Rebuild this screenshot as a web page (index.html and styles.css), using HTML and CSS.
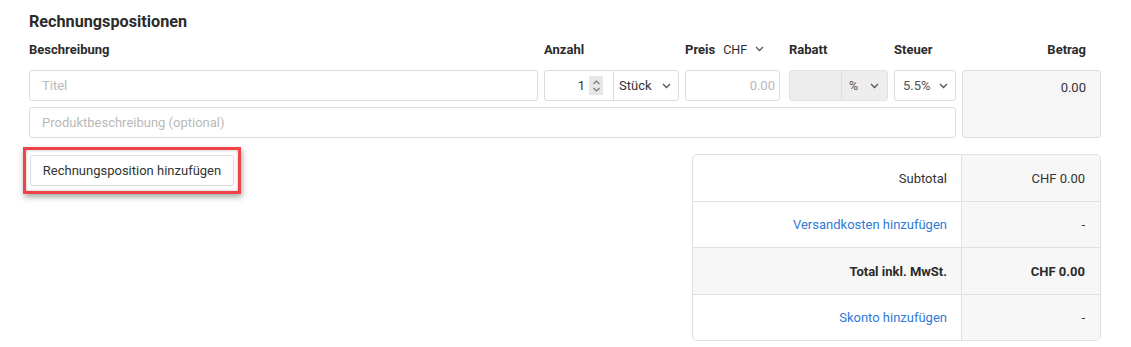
FILE: index.html
```html
<!DOCTYPE html>
<html lang="de">

<head>
    <meta charset="UTF-8">
    <meta name="viewport" content="width=device-width, initial-scale=1.0">
    <title>Rechnungspositionen</title>
    <link rel="stylesheet" href="styles.css">
</head>

<body>
    <section class="items">
        <h2 class="items-title">Rechnungspositionen</h2>

        <div class="item-grid">
            <div class="label">Beschreibung</div>
            <div class="label">Anzahl</div>
            <div class="label label-price">Preis
                <span class="currency">CHF
                    <svg class="chev" width="9" height="6" viewBox="0 0 9 6"><polyline points="1,1 4.5,4.5 8,1" /></svg>
                </span>
            </div>
            <div class="label label-discount">Rabatt</div>
            <div class="label">Steuer</div>
            <div class="label label-right">Betrag</div>

            <input class="field" type="text" placeholder="Titel">
            <div class="qty-group">
                <div class="qty-num">1
                    <span class="spinner">
                        <svg width="9" height="16" viewBox="0 0 9 16"><polyline points="1.5,6 4.5,3 7.5,6" /><polyline points="1.5,10 4.5,13 7.5,10" /></svg>
                    </span>
                </div>
                <div class="qty-unit">Stück
                    <svg class="chev" width="9" height="6" viewBox="0 0 9 6"><polyline points="1,1 4.5,4.5 8,1" /></svg>
                </div>
            </div>
            <input class="field field-num" type="text" placeholder="0.00">
            <div class="discount-group">
                <div class="discount-val"></div>
                <div class="discount-unit">%
                    <svg class="chev" width="9" height="6" viewBox="0 0 9 6"><polyline points="1,1 4.5,4.5 8,1" /></svg>
                </div>
            </div>
            <div class="select tax">5.5%
                <svg class="chev" width="9" height="6" viewBox="0 0 9 6"><polyline points="1,1 4.5,4.5 8,1" /></svg>
            </div>
            <div class="amount">0.00</div>

            <input class="field field-wide" type="text" placeholder="Produktbeschreibung (optional)">
        </div>

        <div class="below">
            <div class="highlight">
                <button class="btn-add" type="button">Rechnungsposition hinzufügen</button>
            </div>

            <div class="summary">
                <div class="sum-row">
                    <div class="sum-label">Subtotal</div>
                    <div class="sum-value">CHF 0.00</div>
                </div>
                <div class="sum-row short">
                    <div class="sum-label"><a href="#">Versandkosten hinzufügen</a></div>
                    <div class="sum-value">-</div>
                </div>
                <div class="sum-row total">
                    <div class="sum-label">Total inkl. MwSt.</div>
                    <div class="sum-value">CHF 0.00</div>
                </div>
                <div class="sum-row short">
                    <div class="sum-label"><a href="#">Skonto hinzufügen</a></div>
                    <div class="sum-value">-</div>
                </div>
            </div>
        </div>
    </section>
</body>

</html>
```

FILE: styles.css
```css
* {
    margin: 0;
    padding: 0;
    box-sizing: border-box;
}

body {
    font-family: Roboto, "Liberation Sans", sans-serif;
    font-size: 13px;
    color: #333;
    background-color: #fff;
}

.items {
    padding: 12px 30px 0 29px;
}

.items-title {
    font-size: 16.2px;
    font-weight: 700;
    line-height: 20px;
    color: #2b2b2b;
}

.item-grid {
    display: grid;
    grid-template-columns: 509px 135px 95px 102px 62px 139px;
    column-gap: 6px;
    row-gap: 6px;
    margin-top: 7px;
}

.label {
    display: flex;
    align-items: center;
    height: 20px;
    font-weight: 700;
    font-size: 13px;
    color: #2b2b2b;
    margin-bottom: 5px;
}

.label-discount {
    padding-left: 3px;
}

.label-right {
    justify-content: flex-end;
    padding-right: 15px;
}

.currency {
    display: inline-flex;
    align-items: center;
    gap: 8px;
    margin-left: 8px;
    font-weight: 400;
    font-size: 12.5px;
}

.chev {
    fill: none;
    stroke: #555;
    stroke-width: 1.3;
}

.field {
    height: 31px;
    border: 1px solid #dcdcdc;
    border-radius: 3px;
    padding: 0 12px;
    font-family: inherit;
    font-size: 13px;
    color: #333;
    outline: none;
}

.field::placeholder {
    color: #b9b9b9;
}

.field-num {
    text-align: right;
    padding-right: 4px;
}

.field-wide {
    grid-column: 1 / 6;
}

.qty-group,
.discount-group {
    display: flex;
    height: 31px;
    border: 1px solid #dcdcdc;
    border-radius: 3px;
}

.qty-num {
    display: flex;
    align-items: center;
    justify-content: flex-end;
    width: 69px;
    padding-right: 10px;
    border-right: 1px solid #dcdcdc;
}

.spinner {
    display: flex;
    align-items: center;
    justify-content: center;
    width: 14px;
    height: 19px;
    margin-left: 4px;
    background-color: #e6e6e6;
}

.spinner svg {
    fill: none;
    stroke: #777;
    stroke-width: 1.1;
}

.qty-unit {
    flex: 1;
    display: flex;
    align-items: center;
    justify-content: space-between;
    padding: 0 7px 0 5px;
}

.discount-group {
    margin-left: 3px;
    background-color: #ededed;
    border-color: #e2e2e2;
}

.discount-val {
    width: 52px;
    border-right: 1px solid #dedede;
}

.discount-unit {
    flex: 1;
    display: flex;
    align-items: center;
    justify-content: space-between;
    padding: 0 8px 0 7px;
    color: #555;
    font-size: 12.5px;
}

.select {
    display: flex;
    align-items: center;
    justify-content: space-between;
    height: 31px;
    border: 1px solid #dcdcdc;
    border-radius: 3px;
    padding: 0 7px 0 8px;
    color: #555;
}

.amount {
    grid-row: span 2;
    background-color: #f6f6f6;
    border: 1px solid #dedede;
    border-radius: 3px;
    text-align: right;
    padding: 9px 14px 0 0;
}

.below {
    display: flex;
    justify-content: space-between;
    align-items: flex-start;
    margin-top: 9px;
}

.highlight {
    margin-left: -6px;
    padding: 5px 4px;
    border: 3px solid #ef4348;
    box-shadow: 1px 3px 6px rgba(0, 0, 0, 0.35), inset 0 0 3px rgba(0, 0, 0, 0.3);
}

.btn-add {
    display: block;
    height: 31px;
    width: 204px;
    background-color: #fff;
    border: 1px solid #dcdcdc;
    border-radius: 2px;
    font-family: inherit;
    font-size: 13px;
    color: #333;
}

.summary {
    width: 409px;
    margin-top: 7px;
    border: 1px solid #e0e0e0;
    border-radius: 5px;
    overflow: hidden;
}

.sum-row {
    display: grid;
    grid-template-columns: 269px 1fr;
    height: 47px;
    border-top: 1px solid #e0e0e0;
}

.sum-row:first-child {
    border-top: none;
    height: 46px;
}

.sum-row.short {
    height: 46px;
}

.sum-label,
.sum-value {
    display: flex;
    align-items: center;
    justify-content: flex-end;
}

.sum-label {
    padding-right: 14px;
    border-right: 1px solid #e0e0e0;
}

.sum-value {
    padding-right: 15px;
    background-color: #f7f7f7;
}

.sum-row.total {
    background-color: #f7f7f7;
    font-weight: 700;
    color: #2b2b2b;
}

.sum-label a {
    color: #2f7ad6;
    text-decoration: none;
}
```
